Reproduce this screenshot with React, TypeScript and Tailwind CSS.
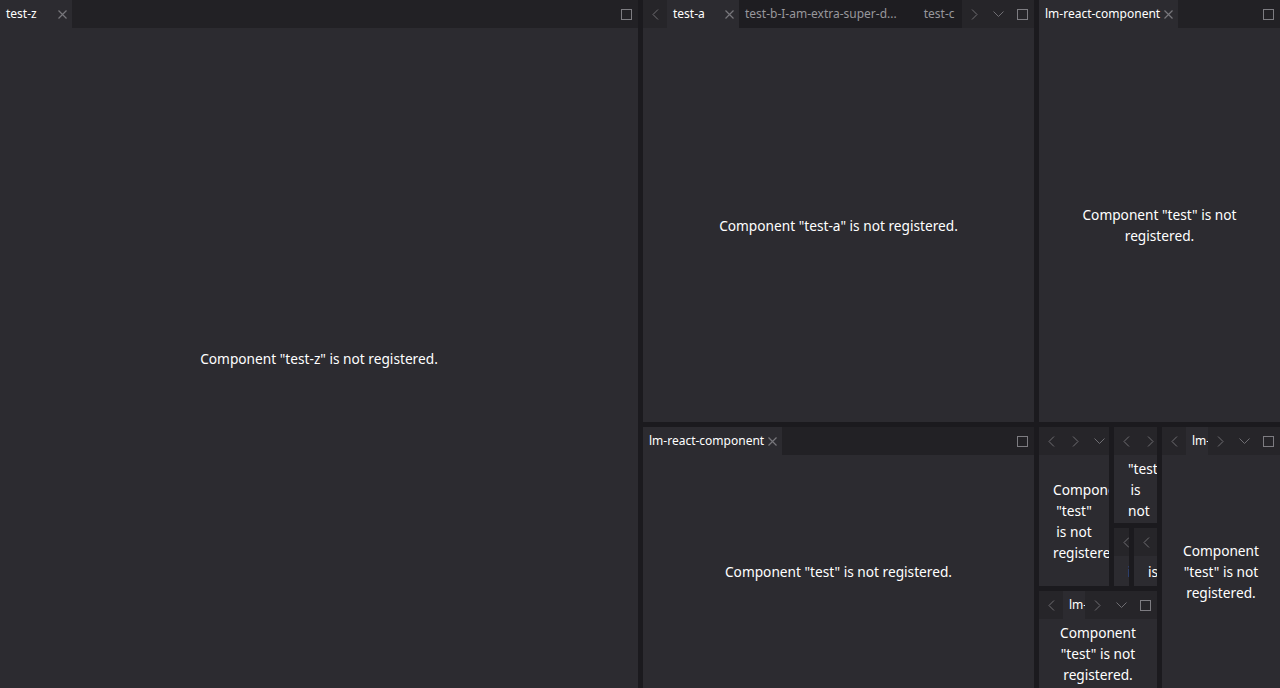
import clsx from "clsx";

// ── colours ────────────────────────────────────────────────────────────────
// splitter #1b1a1e · header #222125 · content / active tab #2c2b30

type TabDef = { title: string; active?: boolean };

function ChevronLeft() {
  return (
    <svg width="7" height="11" viewBox="0 0 7 11" fill="none">
      <polyline points="6,0.5 1,5.5 6,10.5" stroke="#6f6e73" strokeWidth="1" />
    </svg>
  );
}

function ChevronRight() {
  return (
    <svg width="7" height="11" viewBox="0 0 7 11" fill="none">
      <polyline points="1,0.5 6,5.5 1,10.5" stroke="#6f6e73" strokeWidth="1" />
    </svg>
  );
}

function ChevronDown() {
  return (
    <svg width="11" height="6" viewBox="0 0 11 6" fill="none">
      <polyline points="0.5,0.5 5.5,5.5 10.5,0.5" stroke="#6f6e73" strokeWidth="1" />
    </svg>
  );
}

function MaxIcon() {
  return (
    <svg width="11" height="11" viewBox="0 0 11 11" fill="none">
      <rect x="0.5" y="0.5" width="10" height="10" stroke="#7d7c81" strokeWidth="1" />
    </svg>
  );
}

function CloseIcon({ hidden }: { hidden?: boolean }) {
  return (
    <svg
      width="9"
      height="9"
      viewBox="0 0 9 9"
      fill="none"
      className={clsx("ml-auto shrink-0", hidden && "invisible")}
    >
      <path d="M0.5 0.5 L8.5 8.5 M8.5 0.5 L0.5 8.5" stroke="#77767b" strokeWidth="1.2" />
    </svg>
  );
}

function Btn({ children }: { children: React.ReactNode }) {
  return (
    <div className="flex h-full w-[24px] shrink-0 items-center justify-center">
      {children}
    </div>
  );
}

function Tab({ title, active }: TabDef) {
  return (
    <div
      className={clsx(
        "flex h-full min-w-[72px] shrink-0 items-center",
        active
          ? "bg-[#2c2b30] pl-[6px] pr-[5px] text-white"
          : "bg-[#1e1d21] pl-[6px] pr-[8px] text-[#98979c]"
      )}
    >
      <span className="mr-[4px] whitespace-nowrap">{title}</span>
      <CloseIcon hidden={!active} />
    </div>
  );
}

function Header({ tabs, nav }: { tabs: TabDef[]; nav?: boolean }) {
  return (
    <div className="flex h-[28px] shrink-0 overflow-hidden bg-[#222125] text-[12px]">
      {nav && (
        <div className="bg-[#262529]">
          <Btn>
            <ChevronLeft />
          </Btn>
        </div>
      )}
      <div className="flex h-full min-w-0 flex-1 overflow-hidden">
        {tabs.map((t) => (
          <Tab key={t.title} {...t} />
        ))}
      </div>
      <div className={clsx("flex h-full shrink-0", nav && "bg-[#262529]")}>
        {nav && (
          <>
            <Btn>
              <ChevronRight />
            </Btn>
            <Btn>
              <ChevronDown />
            </Btn>
          </>
        )}
        <Btn>
          <MaxIcon />
        </Btn>
      </div>
    </div>
  );
}

function Stack({
  tabs,
  nav,
  text,
  className,
}: {
  tabs: TabDef[];
  nav?: boolean;
  text: string;
  className?: string;
}) {
  return (
    <div className={clsx("flex min-h-0 min-w-0 flex-col overflow-hidden", className)}>
      <Header tabs={tabs} nav={nav} />
      <div className="flex min-h-0 flex-1 items-center justify-center overflow-hidden bg-[#2c2b30] px-[14px]">
        <p className="w-full min-w-0 text-center text-[13.7px] leading-[21px] text-white">
          {text}
        </p>
      </div>
    </div>
  );
}

const LM = [{ title: "lm-react-component", active: true }];
const NOT_REG = 'Component "test" is not registered.';

export default function App() {
  return (
    <div
      className="flex h-[688px] w-[1280px] gap-[5px] overflow-hidden bg-[#1b1a1e]"
      style={{ fontFamily: '"Noto Sans", "Open Sans", sans-serif' }}
    >
      {/* ── left ─────────────────────────────────────────────────── */}
      <Stack
        className="w-[638px] shrink-0"
        tabs={[{ title: "test-z", active: true }]}
        text={'Component "test-z" is not registered.'}
      />

      {/* ── right column ─────────────────────────────────────────── */}
      <div className="flex min-w-0 flex-1 flex-col gap-[5px]">
        <div className="flex h-[422px] shrink-0 gap-[5px]">
          <Stack
            className="flex-1"
            nav
            tabs={[
              { title: "test-a", active: true },
              { title: "test-b-I-am-extra-super-d..." },
              { title: "test-c" },
            ]}
            text={'Component "test-a" is not registered.'}
          />
          <Stack className="w-[241px] shrink-0" tabs={LM} text={NOT_REG} />
        </div>

        <div className="flex min-h-0 flex-1 gap-[5px]">
          <Stack className="w-[391px] shrink-0" tabs={LM} text={NOT_REG} />

          <div className="flex w-[118px] shrink-0 flex-col gap-[5px]">
            <div className="flex h-[159px] shrink-0 gap-[5px]">
              <Stack className="w-[70px] shrink-0" nav tabs={LM} text={NOT_REG} />
              <div className="flex min-w-0 flex-1 flex-col gap-[5px]">
                <Stack className="h-[96px] shrink-0" nav tabs={LM} text={NOT_REG} />
                <div className="flex min-h-0 flex-1 gap-[5px]">
                  <Stack className="w-[15px] shrink-0" nav tabs={LM} text={NOT_REG} />
                  <Stack className="flex-1" nav tabs={LM} text={NOT_REG} />
                </div>
              </div>
            </div>
            <Stack className="flex-1" nav tabs={LM} text={NOT_REG} />
          </div>

          <Stack className="flex-1" nav tabs={LM} text={NOT_REG} />
        </div>
      </div>
    </div>
  );
}
